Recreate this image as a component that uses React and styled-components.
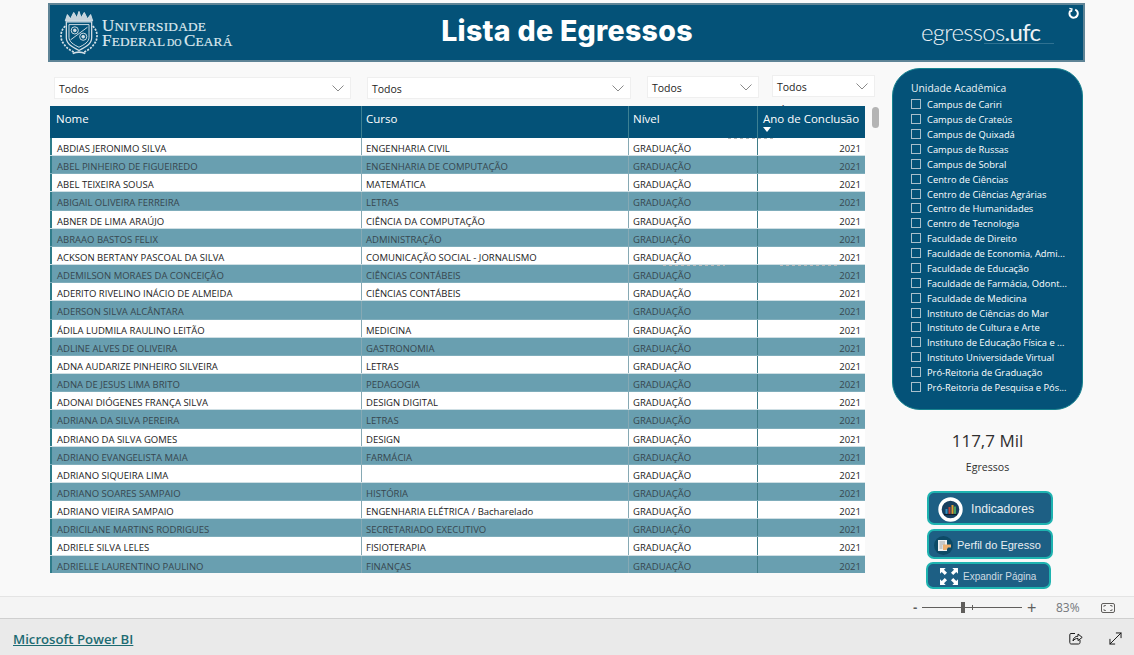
import React from 'react'
import styled, { createGlobalStyle } from 'styled-components'
import { MoveDiagonal } from 'lucide-react'

const Global = createGlobalStyle`
  html, body { margin: 0; padding: 0; background: #f9f9f9; overflow: hidden; }
  * { box-sizing: border-box; }
  body { font-family: "Open Sans", "Noto Sans", sans-serif; }
`

const students = [
  ['ABDIAS JERONIMO SILVA', 'ENGENHARIA CIVIL'],
  ['ABEL PINHEIRO DE FIGUEIREDO', 'ENGENHARIA DE COMPUTAÇÃO'],
  ['ABEL TEIXEIRA SOUSA', 'MATEMÁTICA'],
  ['ABIGAIL OLIVEIRA FERREIRA', 'LETRAS'],
  ['ABNER DE LIMA ARAÚJO', 'CIÊNCIA DA COMPUTAÇÃO'],
  ['ABRAAO BASTOS FELIX', 'ADMINISTRAÇÃO'],
  ['ACKSON BERTANY PASCOAL DA SILVA', 'COMUNICAÇÃO SOCIAL - JORNALISMO'],
  ['ADEMILSON MORAES DA CONCEIÇÃO', 'CIÊNCIAS CONTÁBEIS'],
  ['ADERITO RIVELINO INÁCIO DE ALMEIDA', 'CIÊNCIAS CONTÁBEIS'],
  ['ADERSON SILVA ALCÂNTARA', ''],
  ['ÁDILA LUDMILA RAULINO LEITÃO', 'MEDICINA'],
  ['ADLINE ALVES DE OLIVEIRA', 'GASTRONOMIA'],
  ['ADNA AUDARIZE PINHEIRO SILVEIRA', 'LETRAS'],
  ['ADNA DE JESUS LIMA BRITO', 'PEDAGOGIA'],
  ['ADONAI DIÓGENES FRANÇA SILVA', 'DESIGN DIGITAL'],
  ['ADRIANA DA SILVA PEREIRA', 'LETRAS'],
  ['ADRIANO DA SILVA GOMES', 'DESIGN'],
  ['ADRIANO EVANGELISTA MAIA', 'FARMÁCIA'],
  ['ADRIANO SIQUEIRA LIMA', ''],
  ['ADRIANO SOARES SAMPAIO', 'HISTÓRIA'],
  ['ADRIANO VIEIRA SAMPAIO', 'ENGENHARIA ELÉTRICA / Bacharelado'],
  ['ADRICILANE MARTINS RODRIGUES', 'SECRETARIADO EXECUTIVO'],
  ['ADRIELE SILVA LELES', 'FISIOTERAPIA'],
  ['ADRIELLE LAURENTINO PAULINO', 'FINANÇAS'],
]

const units = [
  'Campus de Cariri',
  'Campus de Crateús',
  'Campus de Quixadá',
  'Campus de Russas',
  'Campus de Sobral',
  'Centro de Ciências',
  'Centro de Ciências Agrárias',
  'Centro de Humanidades',
  'Centro de Tecnologia',
  'Faculdade de Direito',
  'Faculdade de Economia, Admi...',
  'Faculdade de Educação',
  'Faculdade de Farmácia, Odont...',
  'Faculdade de Medicina',
  'Instituto de Ciências do Mar',
  'Instituto de Cultura e Arte',
  'Instituto de Educação Física e ...',
  'Instituto Universidade Virtual',
  'Pró-Reitoria de Graduação',
  'Pró-Reitoria de Pesquisa e Pós...',
]

const Page = styled.div`
  width: 1134px;
  height: 655px;
  display: flex;
  flex-direction: column;
  overflow: hidden;
`
const Report = styled.div`
  height: 596px;
  padding: 3px 49px 0 48px;
  background: #f9f9f9;
`
const Header = styled.header`
  height: 59px;
  display: flex;
  align-items: center;
  position: relative;
  background: #045278;
  border: 2px solid #5f8496;
`
const Brand = styled.div`
  width: 347px;
  padding-left: 10px;
  display: flex;
  align-items: center;
  gap: 4px;
`
const BrandName = styled.div`
  font-family: "Liberation Serif", serif;
  color: #dce7ed;
  font-size: 13.3px;
  line-height: 14px;
  letter-spacing: 0.2px;
  word-spacing: -1.4px;
  margin-top: 3px;
  -webkit-text-stroke: 0.2px #dce7ed;
  white-space: nowrap;
`
const BrandLine = styled.div`
  display: block;
`
const BigCap = styled.span`
  font-size: 17px;
`
const TinyCap = styled.span`
  font-size: 10px;
`
const Title = styled.h1`
  margin: 0 0 4px;
  width: 340px;
  text-align: center;
  font-family: Inter, sans-serif;
  font-weight: 800;
  font-size: 28.5px;
  letter-spacing: 0.3px;
  color: #fff;
  white-space: nowrap;
`
const Wordmark = styled.div`
  position: absolute;
  left: 871px;
  top: 13px;
  font-family: Lato, sans-serif;
  font-weight: 300;
  font-size: 24px;
  line-height: 28px;
  letter-spacing: -0.7px;
  color: #eef3f6;
  &::after {
    content: '';
    position: absolute;
    left: 63px;
    width: 70px;
    bottom: 2px;
    height: 1px;
    background: #2f7191;
  }
`
const WordmarkBold = styled.span`
  font-weight: 400;
`
const Refresh = styled.svg`
  position: absolute;
  right: 3px;
  top: 2px;
  width: 13px;
  height: 13px;
`
const Main = styled.div`
  display: flex;
  margin-top: 6px;
`
const LeftColumn = styled.div`
  width: 827px;
  margin-left: 2px;
  padding-top: 7px;
`
const Filters = styled.div`
  display: flex;
  height: 31px;
  padding-left: 4px;
`
const Filter = styled.div`
  width: ${p => p.$width}px;
  margin-right: ${p => p.$gap || 0}px;
  margin-top: ${p => p.$top || 0}px;
  height: 22px;
  display: flex;
  align-items: center;
  justify-content: space-between;
  padding: 1px 5px 0 4px;
  background: #fff;
  border: 1px solid #efefef;
  font-size: 10.5px;
  color: #252423;
`
const Chevron = styled.svg`
  width: 12px;
  height: 7px;
  margin-right: 1px;
`
const TableArea = styled.div`
  position: relative;
  height: 467px;
`
const Ghost = styled.span`
  position: absolute;
  left: 672px;
  top: -3px;
  font-size: 15px;
  color: #555;
  line-height: 1;
`
const GhostSeam = styled.i`
  position: absolute;
  left: ${p => p.$left}px;
  top: ${p => p.$top}px;
  width: ${p => p.$width}px;
  height: 1px;
  background: repeating-linear-gradient(90deg, #b9b9b9 0 3px, transparent 3px 6px);
`
const Table = styled.div`
  position: relative;
  width: 815px;
  height: 467px;
  overflow: hidden;
  background: #fff;
`
const HeadRow = styled.div`
  display: grid;
  grid-template-columns: 311px 267px 129px 108px;
  height: 32px;
  background: #045278;
  color: #fff;
  font-size: 11.5px;
`
const HeadCell = styled.div`
  position: relative;
  padding: 5px 2px 4px ${p => p.$pad || 4}px;
  line-height: 16px;
  border-left: 1px solid ${p => (p.$first ? '#045278' : '#3d8093')};
  white-space: nowrap;
  overflow: hidden;
`
const SortMark = styled.i`
  position: absolute;
  left: 5px;
  top: 21px;
  border: 4px solid transparent;
  border-top: 5px solid #fff;
  border-bottom: 0;
`
const Row = styled.div`
  display: grid;
  grid-template-columns: 311px 267px 129px 108px;
  height: 18.17px;
  background: ${p => (p.$alt ? '#699fb0' : '#fff')};
  color: ${p => (p.$alt ? '#37474f' : '#1c1c1c')};
  border-bottom: 1px solid ${p => (p.$alt ? '#7fadbb' : '#cfdfe4')};
  font-size: 9.53px;
`
const Cell = styled.div`
  padding: 2px 4px 0 ${p => (p.$first ? 5 : 4)}px;
  line-height: 18px;
  white-space: nowrap;
  overflow: hidden;
  text-align: ${p => (p.$right ? 'right' : 'left')};
  border-left: ${p => p.$first ? '2px solid #2f7c8a' : `1px solid ${p.$dark ? '#3f7d88' : '#86a9b4'}`};
`
const ScrollThumb = styled.div`
  position: absolute;
  left: 822px;
  top: 1px;
  width: 7px;
  height: 21px;
  border-radius: 4px;
  background: #b4b4b4;
`
const RightColumn = styled.aside`
  width: 191px;
  margin-left: 15px;
  display: flex;
  flex-direction: column;
  align-items: center;
`
const UnitPanel = styled.div`
  width: 191px;
  height: 342px;
  padding: 13px 8px 0 18px;
  border-radius: 28px;
  background: #045278;
  border: 1px solid #17838f;
  color: #fff;
`
const UnitTitle = styled.div`
  font-size: 10.3px;
  line-height: 13px;
  margin-bottom: 2.4px;
  color: #edf3f6;
`
const UnitItem = styled.div`
  display: flex;
  align-items: center;
  height: 14.89px;
  gap: 6px;
  font-size: 9.35px;
  white-space: nowrap;
`
const Box = styled.span`
  width: 10px;
  height: 10px;
  flex: none;
  border: 1px solid #a9bfcb;
  margin-bottom: 1px;
`
const KpiValue = styled.div`
  margin-top: 19px;
  font-size: 17px;
  line-height: 24px;
  color: #303030;
`
const KpiLabel = styled.div`
  margin-top: 7px;
  font-size: 10.6px;
  line-height: 14px;
  color: #303030;
`
const NavButton = styled.div`
  align-self: flex-start;
  width: ${p => p.$width}px;
  height: ${p => p.$height}px;
  margin-top: ${p => p.$top}px;
  margin-left: ${p => p.$left}px;
  display: flex;
  align-items: center;
  gap: ${p => p.$gap}px;
  padding: 2px 0 0 ${p => p.$pad}px;
  background: #1d5f84;
  border: 2px solid #1eb3b0;
  border-radius: 7px;
  font-family: "Liberation Sans", sans-serif;
  font-size: ${p => p.$size}px;
  color: ${p => (p.$dim ? '#cfdbe2' : '#e8eef2')};
  white-space: nowrap;
`
const ZoomBar = styled.div`
  height: 22px;
  display: flex;
  align-items: center;
  background: #f4f4f4;
  border-top: 1px solid #e4e4e4;
  padding-left: 913px;
  color: #605e5c;
`
const ZoomSign = styled.span`
  font-family: "Liberation Sans", sans-serif;
  font-size: ${p => p.$size}px;
  font-weight: ${p => p.$weight || 400};
  line-height: 1;
  width: 9px;
`
const Slider = styled.div`
  position: relative;
  width: 100px;
  height: 1px;
  background: #605e5c;
  margin-right: 5px;
  &::before {
    content: '';
    position: absolute;
    left: 39px;
    top: -5px;
    width: 4px;
    height: 11px;
    background: #605e5c;
  }
  &::after {
    content: '';
    position: absolute;
    left: 50px;
    top: -2px;
    width: 1px;
    height: 5px;
    background: #605e5c;
  }
`
const ZoomValue = styled.span`
  width: 45px;
  margin-left: 20px;
  font-size: 12px;
  color: #74787c;
`
const Footer = styled.footer`
  height: 37px;
  display: flex;
  align-items: center;
  background: #eaeaea;
  border-top: 1px solid #cfcfcf;
  padding: 0 9px 0 13px;
`
const PowerBiLink = styled.a`
  flex: 1;
  margin-top: 4px;
  font-size: 13.2px;
  font-weight: 600;
  color: #1d6b72;
  text-decoration: underline;
`
const FooterIcons = styled.div`
  display: flex;
  align-items: center;
  gap: 23px;
  margin-top: 2px;
  color: #111;
`

function Crest() {
  return (
    <svg width="38" height="47" viewBox="0 3 36 42" fill="none" stroke="#d5e0e7" strokeWidth="0.9">
      <path d="M5 13 L7 7 L10 11 L13 5 L16 10 L18 4 L20 10 L23 5 L26 11 L29 7 L31 13 Z" fill="#c4d3dc" />
      <path d="M6 14 H30 V29 C30 35 24 38 18 41 C12 38 6 35 6 29 Z" strokeWidth="1.2" />
      <path d="M8.5 16.5 H27.5 V28.5 C27.5 33 23 35.5 18 38 C13 35.5 8.5 33 8.5 28.5 Z" />
      <circle cx="14" cy="22" r="3.4" />
      <circle cx="14" cy="22" r="1.3" fill="#d5e0e7" />
      <circle cx="22" cy="28" r="3.4" />
      <circle cx="22" cy="28" r="1.3" fill="#d5e0e7" />
      <path d="M10 31 L26 19" />
      <path d="M5 18 C0 22 0 30 3 34 C6 39 10 41 14 43" strokeDasharray="2 1.2" strokeWidth="1.6" />
      <path d="M31 18 C36 22 36 30 33 34 C30 39 26 41 22 43" strokeDasharray="2 1.2" strokeWidth="1.6" />
      <path d="M12 44 C16 42 20 42 24 44" strokeWidth="1.6" />
    </svg>
  )
}

function Caret() {
  return (
    <Chevron viewBox="0 0 12 7" fill="none" stroke="#7d7d7d" strokeWidth="0.9">
      <path d="M0.5 0.5 L6 6 L11.5 0.5" />
    </Chevron>
  )
}

function ChartBadge() {
  return (
    <svg width="25" height="25" viewBox="0 0 25 25">
      <circle cx="12.5" cy="12.5" r="10.5" fill="#173f5f" stroke="#fff" strokeWidth="3.4" />
      <rect x="7.5" y="12" width="2" height="5" fill="#2f8fc0" />
      <rect x="10.5" y="10" width="2" height="7" fill="#c0453a" />
      <rect x="13.5" y="8" width="2" height="9" fill="#e0a030" />
      <rect x="16" y="9.5" width="2" height="7.5" fill="#45a060" />
      <path d="M6 17.5 H19" stroke="#0b1d2c" strokeWidth="1.2" />
    </svg>
  )
}

function ProfileBadge() {
  return (
    <svg width="19" height="19" viewBox="0 0 19 19">
      <circle cx="9.5" cy="9.5" r="9.5" fill="#0d4a66" />
      <rect x="4" y="4" width="9" height="11" fill="#f0f0f0" />
      <path d="M5.5 6 H11 M5.5 8 H11 M5.5 10 H8.5 M5.5 12 H8.5" stroke="#8a8a8a" strokeWidth="0.8" />
      <path d="M9 8.5 H17 V11.5 H14 L12.5 14 H9 Z" fill="#eeb070" />
    </svg>
  )
}

function ExpandGlyph() {
  return (
    <svg width="18" height="17" viewBox="0 0 19 18" fill="#fff">
      <path d="M0 0 H6 L4.2 1.8 L7.4 5 L5 7.4 L1.8 4.2 L0 6 Z" />
      <path d="M19 0 H13 L14.8 1.8 L11.6 5 L14 7.4 L17.2 4.2 L19 6 Z" />
      <path d="M0 18 H6 L4.2 16.2 L7.4 13 L5 10.6 L1.8 13.8 L0 12 Z" />
      <path d="M19 18 H13 L14.8 16.2 L11.6 13 L14 10.6 L17.2 13.8 L19 12 Z" />
    </svg>
  )
}

function FitIcon() {
  return (
    <svg width="14" height="10" viewBox="0 0 14 10" fill="none" stroke="#605e5c">
      <rect x="0.5" y="0.5" width="13" height="9" rx="1.5" />
      <path d="M3 4 V2.5 H5 M9 2.5 H11 V4 M11 6 V7.5 H9 M5 7.5 H3 V6" strokeWidth="0.8" />
    </svg>
  )
}

function ShareIcon() {
  return (
    <svg width="14" height="14" viewBox="0 0 14 14" fill="none" stroke="#1a1a1a" strokeWidth="1">
      <path d="M6 2.5 H2 C1.2 2.5 0.8 3 0.8 3.8 V11.5 C0.8 12.4 1.3 13 2.2 13 H9.5 C10.4 13 11 12.4 11 11.5 V9" />
      <path d="M4 10 C4 7 6.5 5.2 9 5.2 V3 L13.2 6.4 L9 9.6 V7.4 C7 7.4 5.2 8.2 4 10 Z" />
    </svg>
  )
}

export default function App() {
  return (
    <Page>
      <Global />
      <Report>
        <Header>
          <Brand>
            <Crest />
            <BrandName>
              <BrandLine><BigCap>U</BigCap>NIVERSIDADE</BrandLine>
              <BrandLine><BigCap>F</BigCap>EDERAL <TinyCap>DO</TinyCap> <BigCap>C</BigCap>EARÁ</BrandLine>
            </BrandName>
          </Brand>
          <Title>Lista de Egressos</Title>
          <Wordmark>egressos<WordmarkBold>.ufc</WordmarkBold></Wordmark>
          <Refresh viewBox="0 0 13 13" fill="none" stroke="#fff" strokeWidth="2">
            <path d="M8.2 2.6 A4.2 4.2 0 1 1 3.8 3.4" />
            <path d="M2.4 1.4 L5 2 L4.4 4.8" strokeWidth="1.3" />
          </Refresh>
        </Header>
        <Main>
          <LeftColumn>
            <Filters>
              <Filter $width={297} $gap={16} $top={2}>Todos<Caret /></Filter>
              <Filter $width={264} $gap={16} $top={2}>Todos<Caret /></Filter>
              <Filter $width={112} $gap={13} $top={1}>Todos<Caret /></Filter>
              <Filter $width={103}>Todos<Caret /></Filter>
            </Filters>
            <TableArea>
              <Ghost aria-hidden>117,7 Mil</Ghost>
              <Table>
                <HeadRow>
                  <HeadCell $first $pad={5}>Nome</HeadCell>
                  <HeadCell>Curso</HeadCell>
                  <HeadCell>Nível</HeadCell>
                  <HeadCell $pad={5}>Ano de Conclusão<SortMark /></HeadCell>
                </HeadRow>
                {students.map(([name, course], i) => (
                  <Row key={name} $alt={i % 2 === 1}>
                    <Cell $first>{name}</Cell>
                    <Cell>{course}</Cell>
                    <Cell>GRADUAÇÃO</Cell>
                    <Cell $right $dark>2021</Cell>
                  </Row>
                ))}
              </Table>
              <GhostSeam $left={678} $top={32} $width={48} />
              <GhostSeam $left={613} $top={159} $width={62} />
              <GhostSeam $left={730} $top={159} $width={60} />
              <ScrollThumb />
            </TableArea>
          </LeftColumn>
          <RightColumn>
            <UnitPanel>
              <UnitTitle>Unidade Acadêmica</UnitTitle>
              {units.map(u => (
                <UnitItem key={u}><Box />{u}</UnitItem>
              ))}
            </UnitPanel>
            <KpiValue>117,7 Mil</KpiValue>
            <KpiLabel>Egressos</KpiLabel>
            <NavButton $width={126} $height={34} $top={17} $left={35} $pad={9} $gap={8} $size={12.2}>
              <ChartBadge />Indicadores
            </NavButton>
            <NavButton $width={126} $height={30} $top={4} $left={35} $pad={5} $gap={4} $size={11}>
              <ProfileBadge />Perfil do Egresso
            </NavButton>
            <NavButton $width={125} $height={27} $top={3} $left={34} $pad={12} $gap={5} $size={10} $dim>
              <ExpandGlyph />Expandir Página
            </NavButton>
          </RightColumn>
        </Main>
      </Report>
      <ZoomBar>
        <ZoomSign $size={13} $weight={700}>-</ZoomSign>
        <Slider />
        <ZoomSign $size={16}>+</ZoomSign>
        <ZoomValue>83%</ZoomValue>
        <FitIcon />
      </ZoomBar>
      <Footer>
        <PowerBiLink>Microsoft Power BI</PowerBiLink>
        <FooterIcons>
          <ShareIcon />
          <MoveDiagonal size={19} strokeWidth={1.2} />
        </FooterIcons>
      </Footer>
    </Page>
  )
}
